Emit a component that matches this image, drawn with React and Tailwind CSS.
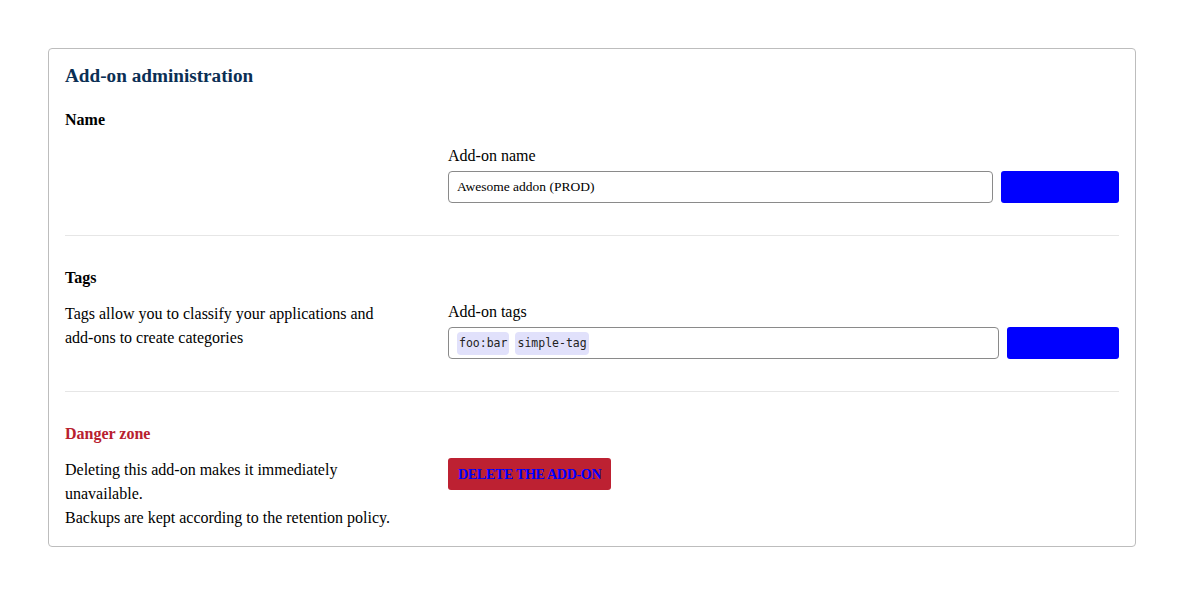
import React from 'react';

const serif = { fontFamily: '"Liberation Serif", "Times New Roman", serif' };

function Section({ title, danger, last, children }) {
  return (
    <section className={`${last ? '' : 'pb-8 border-b border-[#e6e6e6]'}`}>
      <h3 className={`text-base leading-6 font-bold ${danger ? 'text-[#b8202f]' : 'text-black'}`}>{title}</h3>
      <div className="mt-3 grid grid-cols-[332px_1fr] gap-[51px]">{children}</div>
    </section>
  );
}

function Field({ label, children, btnWidth, shift = '' }) {
  return (
    <div className={`flex flex-col ${shift}`}>
      <label className="text-base leading-6 text-black">{label}</label>
      <div className="mt-[3px] flex gap-2">
        {children}
        <button className={`h-8 ${btnWidth} shrink-0 rounded-[3px] bg-[#0000ff]`} />
      </div>
    </div>
  );
}

export default function App() {
  return (
    <div className="min-h-screen bg-white px-12 pt-12 text-black" style={serif}>
      <div className="rounded-[4px] border border-[#bdbdbd] px-4 pt-[15px] pb-4">
        <h2 className="text-[19.2px] leading-6 font-bold text-[#0b2f55]">Add-on administration</h2>

        <div className="mt-5 flex flex-col gap-[30px]">
          <Section title="Name">
            <div />
            <Field label="Add-on name" btnWidth="w-[118px]">
              <input
                defaultValue="Awesome addon (PROD)"
                className="h-8 flex-1 rounded-[4px] border border-[#8a8a8a] px-2 text-[13.5px] text-black outline-none"
                style={serif}
              />
            </Field>
          </Section>

          <Section title="Tags">
            <p className="text-base leading-6">Tags allow you to classify your applications and add-ons to create categories</p>
            <Field label="Add-on tags" btnWidth="w-[112px]" shift="-mt-[2px]">
              <div className="h-8 flex-1 rounded-[4px] border border-[#8a8a8a] px-2 flex items-center gap-[6px]">
                {['foo:bar', 'simple-tag'].map((t) => (
                  <span
                    key={t}
                    className="rounded-[4px] bg-[#e1e1fb] px-[2px] py-[2px] text-[11.5px] leading-[19px] text-[#222]"
                    style={{ fontFamily: '"DejaVu Sans Mono", monospace' }}
                  >
                    {t}
                  </span>
                ))}
              </div>
            </Field>
          </Section>

          <Section title="Danger zone" danger last>
            <div className="text-base leading-6">
              <p>Deleting this add-on makes it immediately unavailable.</p>
              <p>Backups are kept according to the retention policy.</p>
            </div>
            <div>
              <button className="h-8 rounded-[3px] bg-[#bd2132] px-[10px] text-[14px] tracking-[-0.3px] font-bold uppercase text-[#0000ff]" style={serif}>
                Delete the add-on
              </button>
            </div>
          </Section>
        </div>
      </div>
    </div>
  );
}
